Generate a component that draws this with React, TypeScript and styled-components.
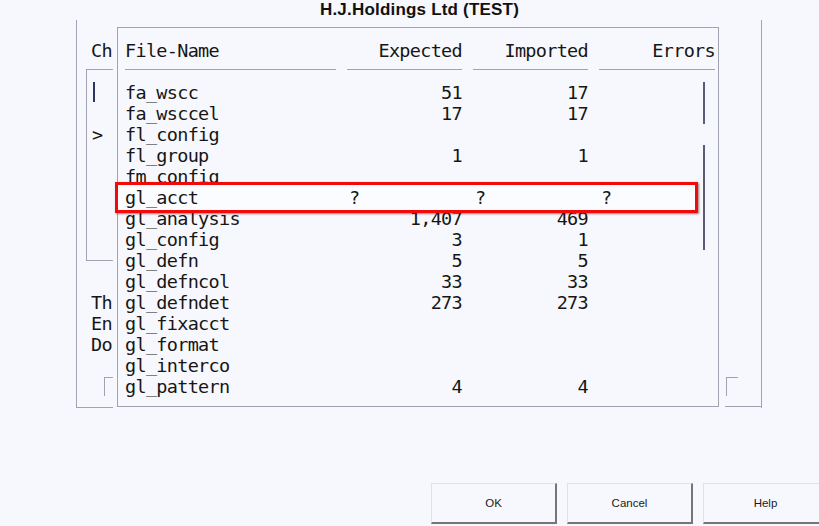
import React from 'react';
import styled, { createGlobalStyle } from 'styled-components';

const BG = '#f7f8fd';
const LINE = '#a2a3b2';
const MONO = `"DejaVu Sans Mono", "Liberation Mono", monospace`;
const SANS = `"Liberation Sans", Arial, sans-serif`;

const Global = createGlobalStyle`
  html, body { margin: 0; padding: 0; background: ${BG}; }
  body { width: 819px; height: 526px; overflow: hidden; }
`;

const Page = styled.div`
  width: 819px;
  height: 526px;
  display: flex;
  flex-direction: column;
  background: ${BG};
  color: #161616;
`;

const Title = styled.div`
  height: 20px;
  line-height: 20px;
  padding-left: 20px;
  text-align: center;
  font-family: ${SANS};
  font-weight: bold;
  font-size: 17px;
  letter-spacing: 0.2px;
  color: #111;
`;

const Frame = styled.div`
  margin-left: 76px;
  width: 686px;
  height: 388px;
  box-sizing: border-box;
  border-left: 1px solid ${LINE};
  border-right: 1px solid ${LINE};
  display: flex;
  font-family: ${MONO};
  font-size: 18.5px;
  letter-spacing: -0.7px;
  line-height: 21px;
`;

const SideCol = styled.div`
  width: 36px;
  flex: none;
  box-sizing: border-box;
  border-bottom: 1px solid ${LINE};
  overflow: hidden;
  padding-top: 20px;
  display: flex;
  flex-direction: column;
`;

const SideLabel = styled.div<{ $gap?: number }>`
  height: 21px;
  padding-left: 14px;
  white-space: nowrap;
  margin-top: ${(p) => p.$gap ?? 0}px;
`;

const InnerBox = styled.div`
  margin: 8px 0 0 9px;
  height: 192px;
  box-sizing: border-box;
  border-top: 1px solid ${LINE};
  border-left: 1px solid ${LINE};
  border-bottom: 1px solid ${LINE};
  padding: 12px 0 0 5px;
`;

const BoxLine = styled.div`
  height: 21px;
  white-space: nowrap;
`;

const Caret = styled.span`
  display: block;
  width: 2px;
  height: 20px;
  margin-left: 1px;
  background: #2b3563;
`;

const Corner = styled.div<{ $left: number; $top?: number }>`
  flex: none;
  width: 12px;
  height: 19px;
  box-sizing: border-box;
  border-top: 1px solid ${LINE};
  border-left: 1px solid ${LINE};
  margin-left: ${(p) => p.$left}px;
  margin-top: ${(p) => p.$top ?? 0}px;
`;

const List = styled.div`
  width: 602px;
  flex: none;
  margin: 7px 0 1px 4px;
  box-sizing: border-box;
  border: 1px solid ${LINE};
  padding: 12px 3px 0 7px;
  background: ${BG};
`;

const Grid = styled.div`
  display: grid;
  grid-template-columns: 211px 115px 115px 116px;
  column-gap: 11px;
`;

const HeadCell = styled.div<{ $right?: boolean }>`
  height: 21px;
  padding-bottom: 8px;
  border-bottom: 1px solid ${LINE};
  text-align: ${(p) => (p.$right ? 'right' : 'left')};
  white-space: nowrap;
`;

const Rows = styled.div`
  margin-top: 12px;
`;

const Row = styled(Grid)`
  height: 21px;
  white-space: pre;
`;

const HighlightRow = styled(Row)`
  position: relative;
  z-index: 1;
  &::before {
    content: '';
    position: absolute;
    left: -10px;
    right: 17px;
    top: -5px;
    bottom: -5px;
    border: 3px solid #f00a0a;
    background: #fbfcff;
    box-shadow: 1px 1px 2px rgba(60, 0, 0, 0.5);
    z-index: -1;
  }
`;

const Cell = styled.div<{ $right?: boolean }>`
  text-align: ${(p) => (p.$right ? 'right' : 'left')};
  padding-left: ${(p) => (p.$right ? 0 : 2)}px;
`;

const NameCell = styled.div``;

const ErrCell = styled.div<{ $bar?: boolean }>`
  position: relative;
  padding-left: 2px;
  &::after {
    content: '';
    display: ${(p) => (p.$bar ? 'block' : 'none')};
    position: absolute;
    right: 10px;
    top: 0;
    bottom: 0;
    width: 2px;
    background: #5a5a7a;
  }
`;

const RightCol = styled.div`
  flex: 1;
  margin: 0 0 1px 6px;
  border-bottom: 1px solid ${LINE};
  display: flex;
  flex-direction: column;
  justify-content: flex-end;
  padding-bottom: 10px;
`;

const ButtonRow = styled.div`
  display: flex;
  gap: 10px;
  margin-top: 75px;
  padding-left: 431px;
`;

const Button = styled.button`
  flex: none;
  width: 126px;
  height: 41px;
  box-sizing: border-box;
  background: ${BG};
  border-top: 1px solid #e0e2ea;
  border-left: 1px solid #e0e2ea;
  border-right: 2px solid #767676;
  border-bottom: 2px solid #767676;
  font-family: ${SANS};
  font-size: 11.5px;
  color: #1a1a1a;
  padding: 0;
`;

type Item = { name: string; exp?: string; imp?: string; bar?: boolean; hi?: boolean };

const items: Item[] = [
  { name: 'fa_wscc', exp: '51', imp: '17', bar: true },
  { name: 'fa_wsccel', exp: '17', imp: '17', bar: true },
  { name: 'fl_config' },
  { name: 'fl_group', exp: '1', imp: '1', bar: true },
  { name: 'fm_config', bar: true },
  { name: 'gl_acct', hi: true, bar: true },
  { name: 'gl_analysis', exp: '1,407', imp: '469', bar: true },
  { name: 'gl_config', exp: '3', imp: '1', bar: true },
  { name: 'gl_defn', exp: '5', imp: '5' },
  { name: 'gl_defncol', exp: '33', imp: '33' },
  { name: 'gl_defndet', exp: '273', imp: '273' },
  { name: 'gl_fixacct' },
  { name: 'gl_format' },
  { name: 'gl_interco' },
  { name: 'gl_pattern', exp: '4', imp: '4' },
];

export default function App() {
  return (
    <Page>
      <Global />
      <Title>H.J.Holdings Ltd (TEST)</Title>
      <Frame>
        <SideCol>
          <SideLabel>Ch</SideLabel>
          <InnerBox>
            <BoxLine>
              <Caret />
            </BoxLine>
            <BoxLine />
            <BoxLine>&gt;</BoxLine>
          </InnerBox>
          <SideLabel $gap={31}>Th</SideLabel>
          <SideLabel>En</SideLabel>
          <SideLabel>Do</SideLabel>
          <Corner $left={27} $top={22} />
        </SideCol>
        <List>
          <Grid>
            <HeadCell>File-Name</HeadCell>
            <HeadCell $right>Expected</HeadCell>
            <HeadCell $right>Imported</HeadCell>
            <HeadCell $right>Errors</HeadCell>
          </Grid>
          <Rows>
            {items.map((it) =>
              it.hi ? (
                <HighlightRow key={it.name}>
                  <NameCell>{it.name}</NameCell>
                  <Cell>?</Cell>
                  <Cell>?</Cell>
                  <ErrCell $bar={it.bar}>?</ErrCell>
                </HighlightRow>
              ) : (
                <Row key={it.name}>
                  <NameCell>{it.name}</NameCell>
                  <Cell $right>{it.exp ?? ''}</Cell>
                  <Cell $right>{it.imp ?? ''}</Cell>
                  <ErrCell $bar={it.bar} />
                </Row>
              )
            )}
          </Rows>
        </List>
        <RightCol>
          <Corner $left={1} />
        </RightCol>
      </Frame>
      <ButtonRow>
        <Button>OK</Button>
        <Button>Cancel</Button>
        <Button>Help</Button>
      </ButtonRow>
    </Page>
  );
}
